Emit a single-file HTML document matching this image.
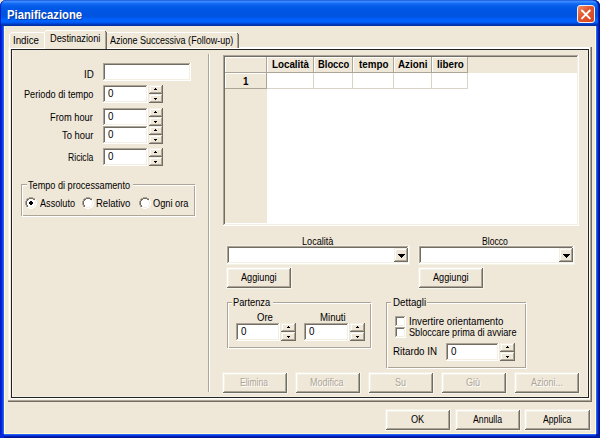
<!DOCTYPE html>
<html><head><meta charset="utf-8"><style>
html,body{margin:0;padding:0;width:600px;height:438px;overflow:hidden;background:#EFE7D8}
body>div,body>svg{position:absolute}
.t{font-family:"Liberation Sans",sans-serif;white-space:nowrap;line-height:13px;height:13px;transform-origin:0 0}
</style></head><body>
<div style="left:0;top:0;width:600px;height:438px;background:#EFE7D8"></div>
<div style="left:590px;top:0px;width:10px;height:10px;background:#FFFFFF"></div>
<div style="left:0;top:0;width:600px;height:26px;border-radius:6px 6px 0 0;background:linear-gradient(to bottom,#0A3FCC 0px,#3D8EFF 1px,#3A8BFF 2px,#1A72F8 3px,#0A62EE 5px,#0058E6 8px,#0053DF 15px,#0056E4 17px,#0060FC 19px,#0062FF 22px,#004FE4 23px,#0040CC 24px,#0030A8 25px,#0030A8 26px);box-shadow:inset 1px 0 0 #0020C8,inset -1px 0 0 #001290,inset -2px 0 0 #0020B8"></div>
<div style="left:0;top:26px;width:4px;height:412px;background:linear-gradient(to right,#0019CF 0px,#0019CF 1px,#0826DA 1px,#0826DA 2px,#0840E8 2px,#0840E8 3px,#2A62F2 3px)"></div>
<div style="left:596px;top:26px;width:4px;height:412px;background:linear-gradient(to right,#2A62F4 0px,#2A62F4 1px,#0838E0 1px,#0838E0 2px,#0020B8 2px,#0020B8 3px,#001290 3px)"></div>
<div style="left:4px;top:434px;width:592px;height:4px;background:linear-gradient(to bottom,#2A62F4 0px,#2A62F4 1px,#0838E0 1px,#0838E0 2px,#0020B8 2px,#0020B8 3px,#001290 3px)"></div>
<div style="left:0;top:434px;width:4px;height:4px;background:#0826DA"></div>
<div style="left:596px;top:434px;width:4px;height:4px;background:#001AA0"></div>
<div style="left:4px;top:26px;width:1px;height:408px;background:#FFFDD0"></div>
<div style="left:595px;top:26px;width:1px;height:408px;background:#FFFDD0"></div>
<div style="left:4px;top:433px;width:592px;height:1px;background:#FFFDD0"></div>
<div class="t" style="left:8px;top:10px;font-size:12.5px;font-weight:bold;color:#0A1E6A;transform:scaleX(0.9);transform-origin:0 0;opacity:.6">Pianificazione</div>
<div class="t" style="left:7px;top:9px;font-size:12.5px;font-weight:bold;color:#FFF;transform:scaleX(0.9);transform-origin:0 0">Pianificazione</div>
<div style="left:577px;top:5px;width:16px;height:16px;border:1px solid #F4F0F0;border-radius:3px;background:linear-gradient(135deg,#F39070 0%,#E2582F 40%,#D54420 100%)"></div>
<svg style="position:absolute;left:577px;top:5px" width="18" height="18"><path d="M5 5.5 L12.8 13.3 M12.8 5.5 L5 13.3" stroke="#FFF" stroke-width="1.9" stroke-linecap="round"/></svg>
<div style="left:8px;top:47px;width:584px;height:355px;background:#EFE7D8"></div>
<div style="left:8px;top:47px;width:584px;height:2px;background:#FFFFFF"></div>
<div style="left:8px;top:47px;width:2px;height:355px;background:#FFFFFF"></div>
<div style="left:8px;top:47px;width:1px;height:355px;background:#F4F2E8"></div>
<div style="left:590px;top:47px;width:1px;height:355px;background:#ACA597"></div>
<div style="left:591px;top:47px;width:1px;height:355px;background:#716D62"></div>
<div style="left:8px;top:399px;width:582px;height:1px;background:#F3EFE3"></div>
<div style="left:8px;top:400px;width:583px;height:1px;background:#ACA597"></div>
<div style="left:8px;top:401px;width:584px;height:1px;background:#716D62"></div>
<div style="left:11px;top:49px;width:578px;height:1px;background:#222"></div>
<div style="left:11px;top:49px;width:1px;height:349px;background:#222"></div>
<div style="left:11px;top:397px;width:578px;height:1px;background:#222"></div>
<div style="left:588px;top:49px;width:1px;height:349px;background:#222"></div>
<div style="left:12px;top:50px;width:1px;height:347px;background:#F8F7F0"></div>
<div style="left:587px;top:50px;width:1px;height:347px;background:#F3EFE3"></div>
<div style="left:12px;top:396px;width:576px;height:1px;background:#F3EFE3"></div>
<div style="left:589px;top:49px;width:1px;height:350px;background:#FFFFFF"></div>
<div style="left:11px;top:398px;width:579px;height:1px;background:#FFFFFF"></div>
<div style="left:9px;top:32px;width:37px;height:16px;background:#EFE7D8"></div>
<div style="left:9px;top:34px;width:1px;height:14px;background:#FFF"></div>
<div style="left:10px;top:33px;width:1px;height:1px;background:#FFF"></div>
<div style="left:11px;top:32px;width:33px;height:1px;background:#FFF"></div>
<div style="left:44px;top:33px;width:1px;height:1px;background:#716D62"></div>
<div style="left:45px;top:34px;width:1px;height:14px;background:#716D62"></div>
<div style="left:44px;top:34px;width:1px;height:14px;background:#ACA597"></div>
<div style="left:105px;top:32px;width:134px;height:16px;background:#EFE7D8"></div>
<div style="left:105px;top:34px;width:1px;height:14px;background:#FFF"></div>
<div style="left:106px;top:33px;width:1px;height:1px;background:#FFF"></div>
<div style="left:107px;top:32px;width:130px;height:1px;background:#FFF"></div>
<div style="left:237px;top:33px;width:1px;height:1px;background:#716D62"></div>
<div style="left:238px;top:34px;width:1px;height:14px;background:#716D62"></div>
<div style="left:237px;top:34px;width:1px;height:14px;background:#ACA597"></div>
<div style="left:44px;top:30px;width:63px;height:19px;background:#EFE7D8"></div>
<div style="left:44px;top:32px;width:1px;height:17px;background:#FFF"></div>
<div style="left:45px;top:31px;width:1px;height:1px;background:#FFF"></div>
<div style="left:46px;top:30px;width:59px;height:1px;background:#FFF"></div>
<div style="left:105px;top:31px;width:1px;height:1px;background:#716D62"></div>
<div style="left:106px;top:32px;width:1px;height:17px;background:#716D62"></div>
<div style="left:105px;top:32px;width:1px;height:17px;background:#ACA597"></div>
<div style="left:45px;top:47px;width:60px;height:2px;background:#EFE7D8"></div>
<div class="t" style="left:13.27px;top:34px;font-size:10px;font-weight:normal;color:#000;transform:scaleX(0.971);-webkit-text-stroke:0px #000">Indice</div>
<div class="t" style="left:49.71px;top:32px;font-size:10px;font-weight:normal;color:#000;transform:scaleX(0.925);-webkit-text-stroke:0px #000">Destinazioni</div>
<div class="t" style="left:110.00px;top:34px;font-size:10px;font-weight:normal;color:#000;transform:scaleX(0.901);-webkit-text-stroke:0px #000">Azione Successiva (Follow-up)</div>
<div class="t" style="left:83.69px;top:68px;font-size:10px;font-weight:normal;color:#000;transform:scaleX(0.980);-webkit-text-stroke:0px #000">ID</div>
<div style="left:103px;top:63px;width:88px;height:18px;background:#FFFFFF"></div>
<div style="left:103px;top:63px;width:88px;height:1px;background:#ACA597"></div>
<div style="left:103px;top:63px;width:1px;height:18px;background:#ACA597"></div>
<div style="left:103px;top:80px;width:88px;height:1px;background:#FFFFFF"></div>
<div style="left:190px;top:63px;width:1px;height:18px;background:#FFFFFF"></div>
<div style="left:104px;top:64px;width:86px;height:1px;background:#716D62"></div>
<div style="left:104px;top:64px;width:1px;height:16px;background:#716D62"></div>
<div style="left:104px;top:79px;width:86px;height:1px;background:#F3EFE3"></div>
<div style="left:189px;top:64px;width:1px;height:16px;background:#F3EFE3"></div>
<div class="t" style="left:23.91px;top:88px;font-size:10px;font-weight:normal;color:#000;transform:scaleX(0.918);-webkit-text-stroke:0px #000">Periodo di tempo</div>
<div style="left:103px;top:85px;width:45px;height:18px;background:#FFFFFF"></div>
<div style="left:103px;top:85px;width:45px;height:1px;background:#ACA597"></div>
<div style="left:103px;top:85px;width:1px;height:18px;background:#ACA597"></div>
<div style="left:103px;top:102px;width:45px;height:1px;background:#FFFFFF"></div>
<div style="left:147px;top:85px;width:1px;height:18px;background:#FFFFFF"></div>
<div style="left:104px;top:86px;width:43px;height:1px;background:#716D62"></div>
<div style="left:104px;top:86px;width:1px;height:16px;background:#716D62"></div>
<div style="left:104px;top:101px;width:43px;height:1px;background:#F3EFE3"></div>
<div style="left:146px;top:86px;width:1px;height:16px;background:#F3EFE3"></div>
<div class="t" style="left:107.75px;top:87px;font-size:10px;font-weight:normal;color:#000;transform:scaleX(0.980);-webkit-text-stroke:0px #000">0</div>
<div style="left:149px;top:85px;width:14px;height:9px;background:#EFE7D8"></div>
<div style="left:149px;top:85px;width:14px;height:1px;background:#F3EFE3"></div>
<div style="left:149px;top:85px;width:1px;height:9px;background:#F3EFE3"></div>
<div style="left:149px;top:93px;width:14px;height:1px;background:#716D62"></div>
<div style="left:162px;top:85px;width:1px;height:9px;background:#716D62"></div>
<div style="left:150px;top:86px;width:12px;height:1px;background:#FFFFFF"></div>
<div style="left:150px;top:86px;width:1px;height:7px;background:#FFFFFF"></div>
<div style="left:150px;top:92px;width:12px;height:1px;background:#ACA597"></div>
<div style="left:161px;top:86px;width:1px;height:7px;background:#ACA597"></div>
<div style="left:149px;top:94px;width:14px;height:9px;background:#EFE7D8"></div>
<div style="left:149px;top:94px;width:14px;height:1px;background:#F3EFE3"></div>
<div style="left:149px;top:94px;width:1px;height:9px;background:#F3EFE3"></div>
<div style="left:149px;top:102px;width:14px;height:1px;background:#716D62"></div>
<div style="left:162px;top:94px;width:1px;height:9px;background:#716D62"></div>
<div style="left:150px;top:95px;width:12px;height:1px;background:#FFFFFF"></div>
<div style="left:150px;top:95px;width:1px;height:7px;background:#FFFFFF"></div>
<div style="left:150px;top:101px;width:12px;height:1px;background:#ACA597"></div>
<div style="left:161px;top:95px;width:1px;height:7px;background:#ACA597"></div>
<div style="left:154px;top:89px;width:3px;height:1px;background:#000"></div>
<div style="left:155px;top:88px;width:1px;height:1px;background:#000"></div>
<div style="left:154px;top:98px;width:3px;height:1px;background:#000"></div>
<div style="left:155px;top:99px;width:1px;height:1px;background:#000"></div>
<div class="t" style="left:50.30px;top:111px;font-size:10px;font-weight:normal;color:#000;transform:scaleX(0.928);-webkit-text-stroke:0px #000">From hour</div>
<div style="left:103px;top:108px;width:45px;height:18px;background:#FFFFFF"></div>
<div style="left:103px;top:108px;width:45px;height:1px;background:#ACA597"></div>
<div style="left:103px;top:108px;width:1px;height:18px;background:#ACA597"></div>
<div style="left:103px;top:125px;width:45px;height:1px;background:#FFFFFF"></div>
<div style="left:147px;top:108px;width:1px;height:18px;background:#FFFFFF"></div>
<div style="left:104px;top:109px;width:43px;height:1px;background:#716D62"></div>
<div style="left:104px;top:109px;width:1px;height:16px;background:#716D62"></div>
<div style="left:104px;top:124px;width:43px;height:1px;background:#F3EFE3"></div>
<div style="left:146px;top:109px;width:1px;height:16px;background:#F3EFE3"></div>
<div class="t" style="left:107.75px;top:110px;font-size:10px;font-weight:normal;color:#000;transform:scaleX(0.980);-webkit-text-stroke:0px #000">0</div>
<div style="left:149px;top:108px;width:14px;height:9px;background:#EFE7D8"></div>
<div style="left:149px;top:108px;width:14px;height:1px;background:#F3EFE3"></div>
<div style="left:149px;top:108px;width:1px;height:9px;background:#F3EFE3"></div>
<div style="left:149px;top:116px;width:14px;height:1px;background:#716D62"></div>
<div style="left:162px;top:108px;width:1px;height:9px;background:#716D62"></div>
<div style="left:150px;top:109px;width:12px;height:1px;background:#FFFFFF"></div>
<div style="left:150px;top:109px;width:1px;height:7px;background:#FFFFFF"></div>
<div style="left:150px;top:115px;width:12px;height:1px;background:#ACA597"></div>
<div style="left:161px;top:109px;width:1px;height:7px;background:#ACA597"></div>
<div style="left:149px;top:117px;width:14px;height:9px;background:#EFE7D8"></div>
<div style="left:149px;top:117px;width:14px;height:1px;background:#F3EFE3"></div>
<div style="left:149px;top:117px;width:1px;height:9px;background:#F3EFE3"></div>
<div style="left:149px;top:125px;width:14px;height:1px;background:#716D62"></div>
<div style="left:162px;top:117px;width:1px;height:9px;background:#716D62"></div>
<div style="left:150px;top:118px;width:12px;height:1px;background:#FFFFFF"></div>
<div style="left:150px;top:118px;width:1px;height:7px;background:#FFFFFF"></div>
<div style="left:150px;top:124px;width:12px;height:1px;background:#ACA597"></div>
<div style="left:161px;top:118px;width:1px;height:7px;background:#ACA597"></div>
<div style="left:154px;top:112px;width:3px;height:1px;background:#000"></div>
<div style="left:155px;top:111px;width:1px;height:1px;background:#000"></div>
<div style="left:154px;top:121px;width:3px;height:1px;background:#000"></div>
<div style="left:155px;top:122px;width:1px;height:1px;background:#000"></div>
<div class="t" style="left:61.77px;top:129px;font-size:10px;font-weight:normal;color:#000;transform:scaleX(0.939);-webkit-text-stroke:0px #000">To hour</div>
<div style="left:103px;top:126px;width:45px;height:18px;background:#FFFFFF"></div>
<div style="left:103px;top:126px;width:45px;height:1px;background:#ACA597"></div>
<div style="left:103px;top:126px;width:1px;height:18px;background:#ACA597"></div>
<div style="left:103px;top:143px;width:45px;height:1px;background:#FFFFFF"></div>
<div style="left:147px;top:126px;width:1px;height:18px;background:#FFFFFF"></div>
<div style="left:104px;top:127px;width:43px;height:1px;background:#716D62"></div>
<div style="left:104px;top:127px;width:1px;height:16px;background:#716D62"></div>
<div style="left:104px;top:142px;width:43px;height:1px;background:#F3EFE3"></div>
<div style="left:146px;top:127px;width:1px;height:16px;background:#F3EFE3"></div>
<div class="t" style="left:107.75px;top:128px;font-size:10px;font-weight:normal;color:#000;transform:scaleX(0.980);-webkit-text-stroke:0px #000">0</div>
<div style="left:149px;top:126px;width:14px;height:9px;background:#EFE7D8"></div>
<div style="left:149px;top:126px;width:14px;height:1px;background:#F3EFE3"></div>
<div style="left:149px;top:126px;width:1px;height:9px;background:#F3EFE3"></div>
<div style="left:149px;top:134px;width:14px;height:1px;background:#716D62"></div>
<div style="left:162px;top:126px;width:1px;height:9px;background:#716D62"></div>
<div style="left:150px;top:127px;width:12px;height:1px;background:#FFFFFF"></div>
<div style="left:150px;top:127px;width:1px;height:7px;background:#FFFFFF"></div>
<div style="left:150px;top:133px;width:12px;height:1px;background:#ACA597"></div>
<div style="left:161px;top:127px;width:1px;height:7px;background:#ACA597"></div>
<div style="left:149px;top:135px;width:14px;height:9px;background:#EFE7D8"></div>
<div style="left:149px;top:135px;width:14px;height:1px;background:#F3EFE3"></div>
<div style="left:149px;top:135px;width:1px;height:9px;background:#F3EFE3"></div>
<div style="left:149px;top:143px;width:14px;height:1px;background:#716D62"></div>
<div style="left:162px;top:135px;width:1px;height:9px;background:#716D62"></div>
<div style="left:150px;top:136px;width:12px;height:1px;background:#FFFFFF"></div>
<div style="left:150px;top:136px;width:1px;height:7px;background:#FFFFFF"></div>
<div style="left:150px;top:142px;width:12px;height:1px;background:#ACA597"></div>
<div style="left:161px;top:136px;width:1px;height:7px;background:#ACA597"></div>
<div style="left:154px;top:130px;width:3px;height:1px;background:#000"></div>
<div style="left:155px;top:129px;width:1px;height:1px;background:#000"></div>
<div style="left:154px;top:139px;width:3px;height:1px;background:#000"></div>
<div style="left:155px;top:140px;width:1px;height:1px;background:#000"></div>
<div class="t" style="left:67.55px;top:151px;font-size:10px;font-weight:normal;color:#000;transform:scaleX(0.862);-webkit-text-stroke:0px #000">Ricicla</div>
<div style="left:103px;top:148px;width:45px;height:18px;background:#FFFFFF"></div>
<div style="left:103px;top:148px;width:45px;height:1px;background:#ACA597"></div>
<div style="left:103px;top:148px;width:1px;height:18px;background:#ACA597"></div>
<div style="left:103px;top:165px;width:45px;height:1px;background:#FFFFFF"></div>
<div style="left:147px;top:148px;width:1px;height:18px;background:#FFFFFF"></div>
<div style="left:104px;top:149px;width:43px;height:1px;background:#716D62"></div>
<div style="left:104px;top:149px;width:1px;height:16px;background:#716D62"></div>
<div style="left:104px;top:164px;width:43px;height:1px;background:#F3EFE3"></div>
<div style="left:146px;top:149px;width:1px;height:16px;background:#F3EFE3"></div>
<div class="t" style="left:107.75px;top:150px;font-size:10px;font-weight:normal;color:#000;transform:scaleX(0.980);-webkit-text-stroke:0px #000">0</div>
<div style="left:149px;top:148px;width:14px;height:9px;background:#EFE7D8"></div>
<div style="left:149px;top:148px;width:14px;height:1px;background:#F3EFE3"></div>
<div style="left:149px;top:148px;width:1px;height:9px;background:#F3EFE3"></div>
<div style="left:149px;top:156px;width:14px;height:1px;background:#716D62"></div>
<div style="left:162px;top:148px;width:1px;height:9px;background:#716D62"></div>
<div style="left:150px;top:149px;width:12px;height:1px;background:#FFFFFF"></div>
<div style="left:150px;top:149px;width:1px;height:7px;background:#FFFFFF"></div>
<div style="left:150px;top:155px;width:12px;height:1px;background:#ACA597"></div>
<div style="left:161px;top:149px;width:1px;height:7px;background:#ACA597"></div>
<div style="left:149px;top:157px;width:14px;height:9px;background:#EFE7D8"></div>
<div style="left:149px;top:157px;width:14px;height:1px;background:#F3EFE3"></div>
<div style="left:149px;top:157px;width:1px;height:9px;background:#F3EFE3"></div>
<div style="left:149px;top:165px;width:14px;height:1px;background:#716D62"></div>
<div style="left:162px;top:157px;width:1px;height:9px;background:#716D62"></div>
<div style="left:150px;top:158px;width:12px;height:1px;background:#FFFFFF"></div>
<div style="left:150px;top:158px;width:1px;height:7px;background:#FFFFFF"></div>
<div style="left:150px;top:164px;width:12px;height:1px;background:#ACA597"></div>
<div style="left:161px;top:158px;width:1px;height:7px;background:#ACA597"></div>
<div style="left:154px;top:152px;width:3px;height:1px;background:#000"></div>
<div style="left:155px;top:151px;width:1px;height:1px;background:#000"></div>
<div style="left:154px;top:161px;width:3px;height:1px;background:#000"></div>
<div style="left:155px;top:162px;width:1px;height:1px;background:#000"></div>
<div style="left:21px;top:184px;width:174px;height:1px;background:#ACA597"></div>
<div style="left:21px;top:184px;width:1px;height:32px;background:#ACA597"></div>
<div style="left:21px;top:215px;width:174px;height:1px;background:#ACA597"></div>
<div style="left:194px;top:184px;width:1px;height:32px;background:#ACA597"></div>
<div style="left:22px;top:185px;width:174px;height:1px;background:#FFFFFF"></div>
<div style="left:22px;top:185px;width:1px;height:32px;background:#FFFFFF"></div>
<div style="left:22px;top:216px;width:174px;height:1px;background:#FFFFFF"></div>
<div style="left:195px;top:185px;width:1px;height:32px;background:#FFFFFF"></div>
<div style="left:27px;top:178px;width:106px;height:12px;background:#EFE7D8"></div>
<div class="t" style="left:28.47px;top:179px;font-size:10px;font-weight:normal;color:#000;transform:scaleX(0.913);-webkit-text-stroke:0px #000">Tempo di processamento</div>
<svg style="position:absolute;left:25px;top:197px" width="12" height="12" shape-rendering="crispEdges"><rect x="4" y="2" width="4" height="1" fill="#FFF"/><rect x="3" y="3" width="6" height="1" fill="#FFF"/><rect x="2" y="4" width="8" height="1" fill="#FFF"/><rect x="2" y="5" width="8" height="1" fill="#FFF"/><rect x="2" y="6" width="8" height="1" fill="#FFF"/><rect x="2" y="7" width="8" height="1" fill="#FFF"/><rect x="3" y="8" width="6" height="1" fill="#FFF"/><rect x="4" y="9" width="4" height="1" fill="#FFF"/><rect x="4" y="0" width="1" height="1" fill="#ACA597"/><rect x="5" y="0" width="1" height="1" fill="#ACA597"/><rect x="6" y="0" width="1" height="1" fill="#ACA597"/><rect x="7" y="0" width="1" height="1" fill="#ACA597"/><rect x="2" y="1" width="1" height="1" fill="#ACA597"/><rect x="3" y="1" width="1" height="1" fill="#ACA597"/><rect x="8" y="1" width="1" height="1" fill="#ACA597"/><rect x="9" y="1" width="1" height="1" fill="#ACA597"/><rect x="1" y="2" width="1" height="1" fill="#ACA597"/><rect x="1" y="3" width="1" height="1" fill="#ACA597"/><rect x="0" y="4" width="1" height="1" fill="#ACA597"/><rect x="0" y="5" width="1" height="1" fill="#ACA597"/><rect x="0" y="6" width="1" height="1" fill="#ACA597"/><rect x="0" y="7" width="1" height="1" fill="#ACA597"/><rect x="1" y="8" width="1" height="1" fill="#ACA597"/><rect x="1" y="9" width="1" height="1" fill="#ACA597"/><rect x="10" y="2" width="1" height="1" fill="#FFFFFF"/><rect x="10" y="3" width="1" height="1" fill="#FFFFFF"/><rect x="11" y="4" width="1" height="1" fill="#FFFFFF"/><rect x="11" y="5" width="1" height="1" fill="#FFFFFF"/><rect x="11" y="6" width="1" height="1" fill="#FFFFFF"/><rect x="11" y="7" width="1" height="1" fill="#FFFFFF"/><rect x="10" y="8" width="1" height="1" fill="#FFFFFF"/><rect x="10" y="9" width="1" height="1" fill="#FFFFFF"/><rect x="2" y="10" width="1" height="1" fill="#FFFFFF"/><rect x="3" y="10" width="1" height="1" fill="#FFFFFF"/><rect x="8" y="10" width="1" height="1" fill="#FFFFFF"/><rect x="9" y="10" width="1" height="1" fill="#FFFFFF"/><rect x="4" y="11" width="1" height="1" fill="#FFFFFF"/><rect x="5" y="11" width="1" height="1" fill="#FFFFFF"/><rect x="6" y="11" width="1" height="1" fill="#FFFFFF"/><rect x="7" y="11" width="1" height="1" fill="#FFFFFF"/><rect x="4" y="1" width="1" height="1" fill="#716D62"/><rect x="5" y="1" width="1" height="1" fill="#716D62"/><rect x="6" y="1" width="1" height="1" fill="#716D62"/><rect x="7" y="1" width="1" height="1" fill="#716D62"/><rect x="2" y="2" width="1" height="1" fill="#716D62"/><rect x="3" y="2" width="1" height="1" fill="#716D62"/><rect x="8" y="2" width="1" height="1" fill="#716D62"/><rect x="9" y="2" width="1" height="1" fill="#716D62"/><rect x="2" y="3" width="1" height="1" fill="#716D62"/><rect x="1" y="4" width="1" height="1" fill="#716D62"/><rect x="1" y="5" width="1" height="1" fill="#716D62"/><rect x="1" y="6" width="1" height="1" fill="#716D62"/><rect x="1" y="7" width="1" height="1" fill="#716D62"/><rect x="2" y="8" width="1" height="1" fill="#716D62"/><rect x="2" y="9" width="1" height="1" fill="#716D62"/><rect x="9" y="3" width="1" height="1" fill="#F3EFE3"/><rect x="10" y="4" width="1" height="1" fill="#F3EFE3"/><rect x="10" y="5" width="1" height="1" fill="#F3EFE3"/><rect x="10" y="6" width="1" height="1" fill="#F3EFE3"/><rect x="10" y="7" width="1" height="1" fill="#F3EFE3"/><rect x="9" y="8" width="1" height="1" fill="#F3EFE3"/><rect x="3" y="9" width="1" height="1" fill="#F3EFE3"/><rect x="8" y="9" width="1" height="1" fill="#F3EFE3"/><rect x="9" y="9" width="1" height="1" fill="#F3EFE3"/><rect x="4" y="10" width="1" height="1" fill="#F3EFE3"/><rect x="5" y="10" width="1" height="1" fill="#F3EFE3"/><rect x="6" y="10" width="1" height="1" fill="#F3EFE3"/><rect x="7" y="10" width="1" height="1" fill="#F3EFE3"/><rect x="5" y="4" width="1" height="1" fill="#000"/><rect x="6" y="4" width="1" height="1" fill="#000"/><rect x="4" y="5" width="1" height="1" fill="#000"/><rect x="5" y="5" width="1" height="1" fill="#000"/><rect x="6" y="5" width="1" height="1" fill="#000"/><rect x="7" y="5" width="1" height="1" fill="#000"/><rect x="4" y="6" width="1" height="1" fill="#000"/><rect x="5" y="6" width="1" height="1" fill="#000"/><rect x="6" y="6" width="1" height="1" fill="#000"/><rect x="7" y="6" width="1" height="1" fill="#000"/><rect x="5" y="7" width="1" height="1" fill="#000"/><rect x="6" y="7" width="1" height="1" fill="#000"/></svg>
<div class="t" style="left:40.00px;top:197px;font-size:10px;font-weight:normal;color:#000;transform:scaleX(0.913);-webkit-text-stroke:0px #000">Assoluto</div>
<svg style="position:absolute;left:82px;top:197px" width="12" height="12" shape-rendering="crispEdges"><rect x="4" y="2" width="4" height="1" fill="#FFF"/><rect x="3" y="3" width="6" height="1" fill="#FFF"/><rect x="2" y="4" width="8" height="1" fill="#FFF"/><rect x="2" y="5" width="8" height="1" fill="#FFF"/><rect x="2" y="6" width="8" height="1" fill="#FFF"/><rect x="2" y="7" width="8" height="1" fill="#FFF"/><rect x="3" y="8" width="6" height="1" fill="#FFF"/><rect x="4" y="9" width="4" height="1" fill="#FFF"/><rect x="4" y="0" width="1" height="1" fill="#ACA597"/><rect x="5" y="0" width="1" height="1" fill="#ACA597"/><rect x="6" y="0" width="1" height="1" fill="#ACA597"/><rect x="7" y="0" width="1" height="1" fill="#ACA597"/><rect x="2" y="1" width="1" height="1" fill="#ACA597"/><rect x="3" y="1" width="1" height="1" fill="#ACA597"/><rect x="8" y="1" width="1" height="1" fill="#ACA597"/><rect x="9" y="1" width="1" height="1" fill="#ACA597"/><rect x="1" y="2" width="1" height="1" fill="#ACA597"/><rect x="1" y="3" width="1" height="1" fill="#ACA597"/><rect x="0" y="4" width="1" height="1" fill="#ACA597"/><rect x="0" y="5" width="1" height="1" fill="#ACA597"/><rect x="0" y="6" width="1" height="1" fill="#ACA597"/><rect x="0" y="7" width="1" height="1" fill="#ACA597"/><rect x="1" y="8" width="1" height="1" fill="#ACA597"/><rect x="1" y="9" width="1" height="1" fill="#ACA597"/><rect x="10" y="2" width="1" height="1" fill="#FFFFFF"/><rect x="10" y="3" width="1" height="1" fill="#FFFFFF"/><rect x="11" y="4" width="1" height="1" fill="#FFFFFF"/><rect x="11" y="5" width="1" height="1" fill="#FFFFFF"/><rect x="11" y="6" width="1" height="1" fill="#FFFFFF"/><rect x="11" y="7" width="1" height="1" fill="#FFFFFF"/><rect x="10" y="8" width="1" height="1" fill="#FFFFFF"/><rect x="10" y="9" width="1" height="1" fill="#FFFFFF"/><rect x="2" y="10" width="1" height="1" fill="#FFFFFF"/><rect x="3" y="10" width="1" height="1" fill="#FFFFFF"/><rect x="8" y="10" width="1" height="1" fill="#FFFFFF"/><rect x="9" y="10" width="1" height="1" fill="#FFFFFF"/><rect x="4" y="11" width="1" height="1" fill="#FFFFFF"/><rect x="5" y="11" width="1" height="1" fill="#FFFFFF"/><rect x="6" y="11" width="1" height="1" fill="#FFFFFF"/><rect x="7" y="11" width="1" height="1" fill="#FFFFFF"/><rect x="4" y="1" width="1" height="1" fill="#716D62"/><rect x="5" y="1" width="1" height="1" fill="#716D62"/><rect x="6" y="1" width="1" height="1" fill="#716D62"/><rect x="7" y="1" width="1" height="1" fill="#716D62"/><rect x="2" y="2" width="1" height="1" fill="#716D62"/><rect x="3" y="2" width="1" height="1" fill="#716D62"/><rect x="8" y="2" width="1" height="1" fill="#716D62"/><rect x="9" y="2" width="1" height="1" fill="#716D62"/><rect x="2" y="3" width="1" height="1" fill="#716D62"/><rect x="1" y="4" width="1" height="1" fill="#716D62"/><rect x="1" y="5" width="1" height="1" fill="#716D62"/><rect x="1" y="6" width="1" height="1" fill="#716D62"/><rect x="1" y="7" width="1" height="1" fill="#716D62"/><rect x="2" y="8" width="1" height="1" fill="#716D62"/><rect x="2" y="9" width="1" height="1" fill="#716D62"/><rect x="9" y="3" width="1" height="1" fill="#F3EFE3"/><rect x="10" y="4" width="1" height="1" fill="#F3EFE3"/><rect x="10" y="5" width="1" height="1" fill="#F3EFE3"/><rect x="10" y="6" width="1" height="1" fill="#F3EFE3"/><rect x="10" y="7" width="1" height="1" fill="#F3EFE3"/><rect x="9" y="8" width="1" height="1" fill="#F3EFE3"/><rect x="3" y="9" width="1" height="1" fill="#F3EFE3"/><rect x="8" y="9" width="1" height="1" fill="#F3EFE3"/><rect x="9" y="9" width="1" height="1" fill="#F3EFE3"/><rect x="4" y="10" width="1" height="1" fill="#F3EFE3"/><rect x="5" y="10" width="1" height="1" fill="#F3EFE3"/><rect x="6" y="10" width="1" height="1" fill="#F3EFE3"/><rect x="7" y="10" width="1" height="1" fill="#F3EFE3"/></svg>
<div class="t" style="left:95.99px;top:197px;font-size:10px;font-weight:normal;color:#000;transform:scaleX(0.951);-webkit-text-stroke:0px #000">Relativo</div>
<svg style="position:absolute;left:139px;top:197px" width="12" height="12" shape-rendering="crispEdges"><rect x="4" y="2" width="4" height="1" fill="#FFF"/><rect x="3" y="3" width="6" height="1" fill="#FFF"/><rect x="2" y="4" width="8" height="1" fill="#FFF"/><rect x="2" y="5" width="8" height="1" fill="#FFF"/><rect x="2" y="6" width="8" height="1" fill="#FFF"/><rect x="2" y="7" width="8" height="1" fill="#FFF"/><rect x="3" y="8" width="6" height="1" fill="#FFF"/><rect x="4" y="9" width="4" height="1" fill="#FFF"/><rect x="4" y="0" width="1" height="1" fill="#ACA597"/><rect x="5" y="0" width="1" height="1" fill="#ACA597"/><rect x="6" y="0" width="1" height="1" fill="#ACA597"/><rect x="7" y="0" width="1" height="1" fill="#ACA597"/><rect x="2" y="1" width="1" height="1" fill="#ACA597"/><rect x="3" y="1" width="1" height="1" fill="#ACA597"/><rect x="8" y="1" width="1" height="1" fill="#ACA597"/><rect x="9" y="1" width="1" height="1" fill="#ACA597"/><rect x="1" y="2" width="1" height="1" fill="#ACA597"/><rect x="1" y="3" width="1" height="1" fill="#ACA597"/><rect x="0" y="4" width="1" height="1" fill="#ACA597"/><rect x="0" y="5" width="1" height="1" fill="#ACA597"/><rect x="0" y="6" width="1" height="1" fill="#ACA597"/><rect x="0" y="7" width="1" height="1" fill="#ACA597"/><rect x="1" y="8" width="1" height="1" fill="#ACA597"/><rect x="1" y="9" width="1" height="1" fill="#ACA597"/><rect x="10" y="2" width="1" height="1" fill="#FFFFFF"/><rect x="10" y="3" width="1" height="1" fill="#FFFFFF"/><rect x="11" y="4" width="1" height="1" fill="#FFFFFF"/><rect x="11" y="5" width="1" height="1" fill="#FFFFFF"/><rect x="11" y="6" width="1" height="1" fill="#FFFFFF"/><rect x="11" y="7" width="1" height="1" fill="#FFFFFF"/><rect x="10" y="8" width="1" height="1" fill="#FFFFFF"/><rect x="10" y="9" width="1" height="1" fill="#FFFFFF"/><rect x="2" y="10" width="1" height="1" fill="#FFFFFF"/><rect x="3" y="10" width="1" height="1" fill="#FFFFFF"/><rect x="8" y="10" width="1" height="1" fill="#FFFFFF"/><rect x="9" y="10" width="1" height="1" fill="#FFFFFF"/><rect x="4" y="11" width="1" height="1" fill="#FFFFFF"/><rect x="5" y="11" width="1" height="1" fill="#FFFFFF"/><rect x="6" y="11" width="1" height="1" fill="#FFFFFF"/><rect x="7" y="11" width="1" height="1" fill="#FFFFFF"/><rect x="4" y="1" width="1" height="1" fill="#716D62"/><rect x="5" y="1" width="1" height="1" fill="#716D62"/><rect x="6" y="1" width="1" height="1" fill="#716D62"/><rect x="7" y="1" width="1" height="1" fill="#716D62"/><rect x="2" y="2" width="1" height="1" fill="#716D62"/><rect x="3" y="2" width="1" height="1" fill="#716D62"/><rect x="8" y="2" width="1" height="1" fill="#716D62"/><rect x="9" y="2" width="1" height="1" fill="#716D62"/><rect x="2" y="3" width="1" height="1" fill="#716D62"/><rect x="1" y="4" width="1" height="1" fill="#716D62"/><rect x="1" y="5" width="1" height="1" fill="#716D62"/><rect x="1" y="6" width="1" height="1" fill="#716D62"/><rect x="1" y="7" width="1" height="1" fill="#716D62"/><rect x="2" y="8" width="1" height="1" fill="#716D62"/><rect x="2" y="9" width="1" height="1" fill="#716D62"/><rect x="9" y="3" width="1" height="1" fill="#F3EFE3"/><rect x="10" y="4" width="1" height="1" fill="#F3EFE3"/><rect x="10" y="5" width="1" height="1" fill="#F3EFE3"/><rect x="10" y="6" width="1" height="1" fill="#F3EFE3"/><rect x="10" y="7" width="1" height="1" fill="#F3EFE3"/><rect x="9" y="8" width="1" height="1" fill="#F3EFE3"/><rect x="3" y="9" width="1" height="1" fill="#F3EFE3"/><rect x="8" y="9" width="1" height="1" fill="#F3EFE3"/><rect x="9" y="9" width="1" height="1" fill="#F3EFE3"/><rect x="4" y="10" width="1" height="1" fill="#F3EFE3"/><rect x="5" y="10" width="1" height="1" fill="#F3EFE3"/><rect x="6" y="10" width="1" height="1" fill="#F3EFE3"/><rect x="7" y="10" width="1" height="1" fill="#F3EFE3"/></svg>
<div class="t" style="left:152.94px;top:197px;font-size:10px;font-weight:normal;color:#000;transform:scaleX(0.924);-webkit-text-stroke:0px #000">Ogni ora</div>
<div style="left:208px;top:54px;width:1px;height:338px;background:#ACA597"></div>
<div style="left:209px;top:54px;width:1px;height:338px;background:#FFF"></div>
<div style="left:223px;top:55px;width:356px;height:171px;background:#FFFFFF"></div>
<div style="left:223px;top:55px;width:356px;height:1px;background:#ACA597"></div>
<div style="left:223px;top:55px;width:1px;height:171px;background:#ACA597"></div>
<div style="left:223px;top:225px;width:356px;height:1px;background:#FFFFFF"></div>
<div style="left:578px;top:55px;width:1px;height:171px;background:#FFFFFF"></div>
<div style="left:224px;top:56px;width:354px;height:1px;background:#716D62"></div>
<div style="left:224px;top:56px;width:1px;height:169px;background:#716D62"></div>
<div style="left:224px;top:224px;width:354px;height:1px;background:#F3EFE3"></div>
<div style="left:577px;top:56px;width:1px;height:169px;background:#F3EFE3"></div>
<div style="left:225px;top:57px;width:42px;height:166px;background:#EFE7D8"></div>
<div style="left:225px;top:57px;width:352px;height:16px;background:#EFE7D8"></div>
<div style="left:225px;top:57px;width:1px;height:15px;background:#FFF"></div>
<div style="left:225px;top:57px;width:41px;height:1px;background:#FFF"></div>
<div style="left:266px;top:57px;width:1px;height:16px;background:#ACA597"></div>
<div style="left:225px;top:72px;width:42px;height:1px;background:#ACA597"></div>
<div style="left:267px;top:57px;width:1px;height:15px;background:#FFF"></div>
<div style="left:267px;top:57px;width:46px;height:1px;background:#FFF"></div>
<div style="left:313px;top:57px;width:1px;height:16px;background:#ACA597"></div>
<div style="left:267px;top:72px;width:47px;height:1px;background:#ACA597"></div>
<div class="t" style="left:271.63px;top:58px;font-size:10px;font-weight:bold;color:#000;transform:scaleX(0.980);-webkit-text-stroke:0px #000">Località</div>
<div style="left:314px;top:57px;width:1px;height:15px;background:#FFF"></div>
<div style="left:314px;top:57px;width:38px;height:1px;background:#FFF"></div>
<div style="left:352px;top:57px;width:1px;height:16px;background:#ACA597"></div>
<div style="left:314px;top:72px;width:39px;height:1px;background:#ACA597"></div>
<div class="t" style="left:317.78px;top:58px;font-size:10px;font-weight:bold;color:#000;transform:scaleX(0.938);-webkit-text-stroke:0px #000">Blocco</div>
<div style="left:353px;top:57px;width:1px;height:15px;background:#FFF"></div>
<div style="left:353px;top:57px;width:40px;height:1px;background:#FFF"></div>
<div style="left:393px;top:57px;width:1px;height:16px;background:#ACA597"></div>
<div style="left:353px;top:72px;width:41px;height:1px;background:#ACA597"></div>
<div class="t" style="left:358.92px;top:58px;font-size:10px;font-weight:bold;color:#000;transform:scaleX(0.980);-webkit-text-stroke:0px #000">tempo</div>
<div style="left:394px;top:57px;width:1px;height:15px;background:#FFF"></div>
<div style="left:394px;top:57px;width:37px;height:1px;background:#FFF"></div>
<div style="left:431px;top:57px;width:1px;height:16px;background:#ACA597"></div>
<div style="left:394px;top:72px;width:38px;height:1px;background:#ACA597"></div>
<div class="t" style="left:398.42px;top:58px;font-size:10px;font-weight:bold;color:#000;transform:scaleX(0.980);-webkit-text-stroke:0px #000">Azioni</div>
<div style="left:432px;top:57px;width:1px;height:15px;background:#FFF"></div>
<div style="left:432px;top:57px;width:35px;height:1px;background:#FFF"></div>
<div style="left:467px;top:57px;width:1px;height:16px;background:#ACA597"></div>
<div style="left:432px;top:72px;width:36px;height:1px;background:#ACA597"></div>
<div class="t" style="left:436.52px;top:58px;font-size:10px;font-weight:bold;color:#000;transform:scaleX(0.980);-webkit-text-stroke:0px #000">libero</div>
<div style="left:225px;top:73px;width:1px;height:15px;background:#FFF"></div>
<div style="left:225px;top:73px;width:41px;height:1px;background:#FFF"></div>
<div style="left:266px;top:73px;width:1px;height:16px;background:#ACA597"></div>
<div style="left:225px;top:88px;width:42px;height:1px;background:#ACA597"></div>
<div class="t" style="left:242.68px;top:75px;font-size:10px;font-weight:bold;color:#000;transform:scaleX(0.980);-webkit-text-stroke:0px #000">1</div>
<div style="left:313px;top:73px;width:1px;height:16px;background:#D8D5C8"></div>
<div style="left:267px;top:88px;width:47px;height:1px;background:#D8D5C8"></div>
<div style="left:352px;top:73px;width:1px;height:16px;background:#D8D5C8"></div>
<div style="left:314px;top:88px;width:39px;height:1px;background:#D8D5C8"></div>
<div style="left:393px;top:73px;width:1px;height:16px;background:#D8D5C8"></div>
<div style="left:353px;top:88px;width:41px;height:1px;background:#D8D5C8"></div>
<div style="left:431px;top:73px;width:1px;height:16px;background:#D8D5C8"></div>
<div style="left:394px;top:88px;width:38px;height:1px;background:#D8D5C8"></div>
<div style="left:467px;top:73px;width:1px;height:16px;background:#D8D5C8"></div>
<div style="left:432px;top:88px;width:36px;height:1px;background:#D8D5C8"></div>
<div class="t" style="left:301.62px;top:235px;font-size:10px;font-weight:normal;color:#000;transform:scaleX(0.912);-webkit-text-stroke:0px #000">Località</div>
<div style="left:226px;top:245px;width:184px;height:1px;background:#F3EFE3"></div>
<div style="left:226px;top:245px;width:1px;height:20px;background:#F3EFE3"></div>
<div style="left:226px;top:264px;width:184px;height:1px;background:#F2F2E6"></div>
<div style="left:409px;top:245px;width:1px;height:20px;background:#F2F2E6"></div>
<div style="left:227px;top:246px;width:182px;height:18px;background:#FFFFFF"></div>
<div style="left:227px;top:246px;width:182px;height:1px;background:#ACA597"></div>
<div style="left:227px;top:246px;width:1px;height:18px;background:#ACA597"></div>
<div style="left:227px;top:263px;width:182px;height:1px;background:#FFFFFF"></div>
<div style="left:408px;top:246px;width:1px;height:18px;background:#FFFFFF"></div>
<div style="left:228px;top:247px;width:180px;height:1px;background:#716D62"></div>
<div style="left:228px;top:247px;width:1px;height:16px;background:#716D62"></div>
<div style="left:228px;top:262px;width:180px;height:1px;background:#F3EFE3"></div>
<div style="left:407px;top:247px;width:1px;height:16px;background:#F3EFE3"></div>
<div style="left:394px;top:248px;width:14px;height:14px;background:#EFE7D8"></div>
<div style="left:394px;top:248px;width:14px;height:1px;background:#F3EFE3"></div>
<div style="left:394px;top:248px;width:1px;height:14px;background:#F3EFE3"></div>
<div style="left:394px;top:261px;width:14px;height:1px;background:#716D62"></div>
<div style="left:407px;top:248px;width:1px;height:14px;background:#716D62"></div>
<div style="left:395px;top:249px;width:12px;height:1px;background:#FFFFFF"></div>
<div style="left:395px;top:249px;width:1px;height:12px;background:#FFFFFF"></div>
<div style="left:395px;top:260px;width:12px;height:1px;background:#ACA597"></div>
<div style="left:406px;top:249px;width:1px;height:12px;background:#ACA597"></div>
<div style="left:398px;top:254px;width:7px;height:1px;background:#000"></div>
<div style="left:399px;top:255px;width:5px;height:1px;background:#000"></div>
<div style="left:400px;top:256px;width:3px;height:1px;background:#000"></div>
<div style="left:401px;top:257px;width:1px;height:1px;background:#000"></div>
<div style="left:226px;top:267px;width:66px;height:22px;background:#EFE7D8"></div>
<div style="left:226px;top:267px;width:66px;height:1px;background:#F3EFE3"></div>
<div style="left:226px;top:267px;width:1px;height:22px;background:#F3EFE3"></div>
<div style="left:226px;top:288px;width:66px;height:1px;background:#F6F6EE"></div>
<div style="left:291px;top:267px;width:1px;height:22px;background:#F6F6EE"></div>
<div style="left:227px;top:268px;width:64px;height:1px;background:#FFFFFF"></div>
<div style="left:227px;top:268px;width:1px;height:20px;background:#FFFFFF"></div>
<div style="left:227px;top:287px;width:64px;height:1px;background:#716D62"></div>
<div style="left:290px;top:268px;width:1px;height:20px;background:#716D62"></div>
<div style="left:228px;top:269px;width:62px;height:1px;background:#F3F1E6"></div>
<div style="left:228px;top:269px;width:1px;height:18px;background:#F3F1E6"></div>
<div style="left:228px;top:286px;width:62px;height:1px;background:#ACA597"></div>
<div style="left:289px;top:269px;width:1px;height:18px;background:#ACA597"></div>
<div class="t" style="left:241.30px;top:271px;font-size:10px;font-weight:normal;color:#000;transform:scaleX(0.915);-webkit-text-stroke:0px #000">Aggiungi</div>
<div class="t" style="left:482.35px;top:235px;font-size:10px;font-weight:normal;color:#000;transform:scaleX(0.862);-webkit-text-stroke:0px #000">Blocco</div>
<div style="left:418px;top:245px;width:157px;height:1px;background:#F3EFE3"></div>
<div style="left:418px;top:245px;width:1px;height:20px;background:#F3EFE3"></div>
<div style="left:418px;top:264px;width:157px;height:1px;background:#F2F2E6"></div>
<div style="left:574px;top:245px;width:1px;height:20px;background:#F2F2E6"></div>
<div style="left:419px;top:246px;width:155px;height:18px;background:#FFFFFF"></div>
<div style="left:419px;top:246px;width:155px;height:1px;background:#ACA597"></div>
<div style="left:419px;top:246px;width:1px;height:18px;background:#ACA597"></div>
<div style="left:419px;top:263px;width:155px;height:1px;background:#FFFFFF"></div>
<div style="left:573px;top:246px;width:1px;height:18px;background:#FFFFFF"></div>
<div style="left:420px;top:247px;width:153px;height:1px;background:#716D62"></div>
<div style="left:420px;top:247px;width:1px;height:16px;background:#716D62"></div>
<div style="left:420px;top:262px;width:153px;height:1px;background:#F3EFE3"></div>
<div style="left:572px;top:247px;width:1px;height:16px;background:#F3EFE3"></div>
<div style="left:559px;top:248px;width:14px;height:14px;background:#EFE7D8"></div>
<div style="left:559px;top:248px;width:14px;height:1px;background:#F3EFE3"></div>
<div style="left:559px;top:248px;width:1px;height:14px;background:#F3EFE3"></div>
<div style="left:559px;top:261px;width:14px;height:1px;background:#716D62"></div>
<div style="left:572px;top:248px;width:1px;height:14px;background:#716D62"></div>
<div style="left:560px;top:249px;width:12px;height:1px;background:#FFFFFF"></div>
<div style="left:560px;top:249px;width:1px;height:12px;background:#FFFFFF"></div>
<div style="left:560px;top:260px;width:12px;height:1px;background:#ACA597"></div>
<div style="left:571px;top:249px;width:1px;height:12px;background:#ACA597"></div>
<div style="left:563px;top:254px;width:7px;height:1px;background:#000"></div>
<div style="left:564px;top:255px;width:5px;height:1px;background:#000"></div>
<div style="left:565px;top:256px;width:3px;height:1px;background:#000"></div>
<div style="left:566px;top:257px;width:1px;height:1px;background:#000"></div>
<div style="left:418px;top:267px;width:66px;height:22px;background:#EFE7D8"></div>
<div style="left:418px;top:267px;width:66px;height:1px;background:#F3EFE3"></div>
<div style="left:418px;top:267px;width:1px;height:22px;background:#F3EFE3"></div>
<div style="left:418px;top:288px;width:66px;height:1px;background:#F6F6EE"></div>
<div style="left:483px;top:267px;width:1px;height:22px;background:#F6F6EE"></div>
<div style="left:419px;top:268px;width:64px;height:1px;background:#FFFFFF"></div>
<div style="left:419px;top:268px;width:1px;height:20px;background:#FFFFFF"></div>
<div style="left:419px;top:287px;width:64px;height:1px;background:#716D62"></div>
<div style="left:482px;top:268px;width:1px;height:20px;background:#716D62"></div>
<div style="left:420px;top:269px;width:62px;height:1px;background:#F3F1E6"></div>
<div style="left:420px;top:269px;width:1px;height:18px;background:#F3F1E6"></div>
<div style="left:420px;top:286px;width:62px;height:1px;background:#ACA597"></div>
<div style="left:481px;top:269px;width:1px;height:18px;background:#ACA597"></div>
<div class="t" style="left:433.30px;top:271px;font-size:10px;font-weight:normal;color:#000;transform:scaleX(0.915);-webkit-text-stroke:0px #000">Aggiungi</div>
<div style="left:227px;top:302px;width:144px;height:1px;background:#ACA597"></div>
<div style="left:227px;top:302px;width:1px;height:46px;background:#ACA597"></div>
<div style="left:227px;top:347px;width:144px;height:1px;background:#ACA597"></div>
<div style="left:370px;top:302px;width:1px;height:46px;background:#ACA597"></div>
<div style="left:228px;top:303px;width:144px;height:1px;background:#FFFFFF"></div>
<div style="left:228px;top:303px;width:1px;height:46px;background:#FFFFFF"></div>
<div style="left:228px;top:348px;width:144px;height:1px;background:#FFFFFF"></div>
<div style="left:371px;top:303px;width:1px;height:46px;background:#FFFFFF"></div>
<div style="left:232px;top:296px;width:41px;height:12px;background:#EFE7D8"></div>
<div class="t" style="left:233.30px;top:296px;font-size:10px;font-weight:normal;color:#000;transform:scaleX(0.929);-webkit-text-stroke:0px #000">Partenza</div>
<div class="t" style="left:256.52px;top:311px;font-size:10px;font-weight:normal;color:#000;transform:scaleX(0.952);-webkit-text-stroke:0px #000">Ore</div>
<div style="left:236px;top:323px;width:44px;height:18px;background:#FFFFFF"></div>
<div style="left:236px;top:323px;width:44px;height:1px;background:#ACA597"></div>
<div style="left:236px;top:323px;width:1px;height:18px;background:#ACA597"></div>
<div style="left:236px;top:340px;width:44px;height:1px;background:#FFFFFF"></div>
<div style="left:279px;top:323px;width:1px;height:18px;background:#FFFFFF"></div>
<div style="left:237px;top:324px;width:42px;height:1px;background:#716D62"></div>
<div style="left:237px;top:324px;width:1px;height:16px;background:#716D62"></div>
<div style="left:237px;top:339px;width:42px;height:1px;background:#F3EFE3"></div>
<div style="left:278px;top:324px;width:1px;height:16px;background:#F3EFE3"></div>
<div class="t" style="left:240.75px;top:325px;font-size:10px;font-weight:normal;color:#000;transform:scaleX(0.980);-webkit-text-stroke:0px #000">0</div>
<div style="left:281px;top:323px;width:15px;height:9px;background:#EFE7D8"></div>
<div style="left:281px;top:323px;width:15px;height:1px;background:#F3EFE3"></div>
<div style="left:281px;top:323px;width:1px;height:9px;background:#F3EFE3"></div>
<div style="left:281px;top:331px;width:15px;height:1px;background:#716D62"></div>
<div style="left:295px;top:323px;width:1px;height:9px;background:#716D62"></div>
<div style="left:282px;top:324px;width:13px;height:1px;background:#FFFFFF"></div>
<div style="left:282px;top:324px;width:1px;height:7px;background:#FFFFFF"></div>
<div style="left:282px;top:330px;width:13px;height:1px;background:#ACA597"></div>
<div style="left:294px;top:324px;width:1px;height:7px;background:#ACA597"></div>
<div style="left:281px;top:332px;width:15px;height:9px;background:#EFE7D8"></div>
<div style="left:281px;top:332px;width:15px;height:1px;background:#F3EFE3"></div>
<div style="left:281px;top:332px;width:1px;height:9px;background:#F3EFE3"></div>
<div style="left:281px;top:340px;width:15px;height:1px;background:#716D62"></div>
<div style="left:295px;top:332px;width:1px;height:9px;background:#716D62"></div>
<div style="left:282px;top:333px;width:13px;height:1px;background:#FFFFFF"></div>
<div style="left:282px;top:333px;width:1px;height:7px;background:#FFFFFF"></div>
<div style="left:282px;top:339px;width:13px;height:1px;background:#ACA597"></div>
<div style="left:294px;top:333px;width:1px;height:7px;background:#ACA597"></div>
<div style="left:287px;top:327px;width:3px;height:1px;background:#000"></div>
<div style="left:288px;top:326px;width:1px;height:1px;background:#000"></div>
<div style="left:287px;top:336px;width:3px;height:1px;background:#000"></div>
<div style="left:288px;top:337px;width:1px;height:1px;background:#000"></div>
<div class="t" style="left:319.98px;top:311px;font-size:10px;font-weight:normal;color:#000;transform:scaleX(0.962);-webkit-text-stroke:0px #000">Minuti</div>
<div style="left:304px;top:323px;width:45px;height:18px;background:#FFFFFF"></div>
<div style="left:304px;top:323px;width:45px;height:1px;background:#ACA597"></div>
<div style="left:304px;top:323px;width:1px;height:18px;background:#ACA597"></div>
<div style="left:304px;top:340px;width:45px;height:1px;background:#FFFFFF"></div>
<div style="left:348px;top:323px;width:1px;height:18px;background:#FFFFFF"></div>
<div style="left:305px;top:324px;width:43px;height:1px;background:#716D62"></div>
<div style="left:305px;top:324px;width:1px;height:16px;background:#716D62"></div>
<div style="left:305px;top:339px;width:43px;height:1px;background:#F3EFE3"></div>
<div style="left:347px;top:324px;width:1px;height:16px;background:#F3EFE3"></div>
<div class="t" style="left:308.75px;top:325px;font-size:10px;font-weight:normal;color:#000;transform:scaleX(0.980);-webkit-text-stroke:0px #000">0</div>
<div style="left:350px;top:323px;width:15px;height:9px;background:#EFE7D8"></div>
<div style="left:350px;top:323px;width:15px;height:1px;background:#F3EFE3"></div>
<div style="left:350px;top:323px;width:1px;height:9px;background:#F3EFE3"></div>
<div style="left:350px;top:331px;width:15px;height:1px;background:#716D62"></div>
<div style="left:364px;top:323px;width:1px;height:9px;background:#716D62"></div>
<div style="left:351px;top:324px;width:13px;height:1px;background:#FFFFFF"></div>
<div style="left:351px;top:324px;width:1px;height:7px;background:#FFFFFF"></div>
<div style="left:351px;top:330px;width:13px;height:1px;background:#ACA597"></div>
<div style="left:363px;top:324px;width:1px;height:7px;background:#ACA597"></div>
<div style="left:350px;top:332px;width:15px;height:9px;background:#EFE7D8"></div>
<div style="left:350px;top:332px;width:15px;height:1px;background:#F3EFE3"></div>
<div style="left:350px;top:332px;width:1px;height:9px;background:#F3EFE3"></div>
<div style="left:350px;top:340px;width:15px;height:1px;background:#716D62"></div>
<div style="left:364px;top:332px;width:1px;height:9px;background:#716D62"></div>
<div style="left:351px;top:333px;width:13px;height:1px;background:#FFFFFF"></div>
<div style="left:351px;top:333px;width:1px;height:7px;background:#FFFFFF"></div>
<div style="left:351px;top:339px;width:13px;height:1px;background:#ACA597"></div>
<div style="left:363px;top:333px;width:1px;height:7px;background:#ACA597"></div>
<div style="left:356px;top:327px;width:3px;height:1px;background:#000"></div>
<div style="left:357px;top:326px;width:1px;height:1px;background:#000"></div>
<div style="left:356px;top:336px;width:3px;height:1px;background:#000"></div>
<div style="left:357px;top:337px;width:1px;height:1px;background:#000"></div>
<div style="left:386px;top:302px;width:140px;height:1px;background:#ACA597"></div>
<div style="left:386px;top:302px;width:1px;height:66px;background:#ACA597"></div>
<div style="left:386px;top:367px;width:140px;height:1px;background:#ACA597"></div>
<div style="left:525px;top:302px;width:1px;height:66px;background:#ACA597"></div>
<div style="left:387px;top:303px;width:140px;height:1px;background:#FFFFFF"></div>
<div style="left:387px;top:303px;width:1px;height:66px;background:#FFFFFF"></div>
<div style="left:387px;top:368px;width:140px;height:1px;background:#FFFFFF"></div>
<div style="left:526px;top:303px;width:1px;height:66px;background:#FFFFFF"></div>
<div style="left:391px;top:296px;width:36px;height:12px;background:#EFE7D8"></div>
<div class="t" style="left:392.57px;top:296px;font-size:10px;font-weight:normal;color:#000;transform:scaleX(0.975);-webkit-text-stroke:0px #000">Dettagli</div>
<div style="left:395px;top:316px;width:11px;height:11px;background:#FFFFFF"></div>
<div style="left:395px;top:316px;width:11px;height:1px;background:#ACA597"></div>
<div style="left:395px;top:316px;width:1px;height:11px;background:#ACA597"></div>
<div style="left:395px;top:326px;width:11px;height:1px;background:#FFFFFF"></div>
<div style="left:405px;top:316px;width:1px;height:11px;background:#FFFFFF"></div>
<div style="left:396px;top:317px;width:9px;height:1px;background:#716D62"></div>
<div style="left:396px;top:317px;width:1px;height:9px;background:#716D62"></div>
<div style="left:396px;top:325px;width:9px;height:1px;background:#F3EFE3"></div>
<div style="left:404px;top:317px;width:1px;height:9px;background:#F3EFE3"></div>
<div style="left:395px;top:327px;width:11px;height:11px;background:#FFFFFF"></div>
<div style="left:395px;top:327px;width:11px;height:1px;background:#ACA597"></div>
<div style="left:395px;top:327px;width:1px;height:11px;background:#ACA597"></div>
<div style="left:395px;top:337px;width:11px;height:1px;background:#FFFFFF"></div>
<div style="left:405px;top:327px;width:1px;height:11px;background:#FFFFFF"></div>
<div style="left:396px;top:328px;width:9px;height:1px;background:#716D62"></div>
<div style="left:396px;top:328px;width:1px;height:9px;background:#716D62"></div>
<div style="left:396px;top:336px;width:9px;height:1px;background:#F3EFE3"></div>
<div style="left:404px;top:328px;width:1px;height:9px;background:#F3EFE3"></div>
<div class="t" style="left:409.07px;top:315px;font-size:10px;font-weight:normal;color:#000;transform:scaleX(0.970);-webkit-text-stroke:0px #000">Invertire orientamento</div>
<div class="t" style="left:409.34px;top:326px;font-size:10px;font-weight:normal;color:#000;transform:scaleX(0.912);-webkit-text-stroke:0px #000">Sbloccare prima di avviare</div>
<div class="t" style="left:393.17px;top:345px;font-size:10px;font-weight:normal;color:#000;transform:scaleX(0.979);-webkit-text-stroke:0px #000">Ritardo IN</div>
<div style="left:446px;top:343px;width:53px;height:18px;background:#FFFFFF"></div>
<div style="left:446px;top:343px;width:53px;height:1px;background:#ACA597"></div>
<div style="left:446px;top:343px;width:1px;height:18px;background:#ACA597"></div>
<div style="left:446px;top:360px;width:53px;height:1px;background:#FFFFFF"></div>
<div style="left:498px;top:343px;width:1px;height:18px;background:#FFFFFF"></div>
<div style="left:447px;top:344px;width:51px;height:1px;background:#716D62"></div>
<div style="left:447px;top:344px;width:1px;height:16px;background:#716D62"></div>
<div style="left:447px;top:359px;width:51px;height:1px;background:#F3EFE3"></div>
<div style="left:497px;top:344px;width:1px;height:16px;background:#F3EFE3"></div>
<div class="t" style="left:450.75px;top:345px;font-size:10px;font-weight:normal;color:#000;transform:scaleX(0.980);-webkit-text-stroke:0px #000">0</div>
<div style="left:500px;top:343px;width:15px;height:9px;background:#EFE7D8"></div>
<div style="left:500px;top:343px;width:15px;height:1px;background:#F3EFE3"></div>
<div style="left:500px;top:343px;width:1px;height:9px;background:#F3EFE3"></div>
<div style="left:500px;top:351px;width:15px;height:1px;background:#716D62"></div>
<div style="left:514px;top:343px;width:1px;height:9px;background:#716D62"></div>
<div style="left:501px;top:344px;width:13px;height:1px;background:#FFFFFF"></div>
<div style="left:501px;top:344px;width:1px;height:7px;background:#FFFFFF"></div>
<div style="left:501px;top:350px;width:13px;height:1px;background:#ACA597"></div>
<div style="left:513px;top:344px;width:1px;height:7px;background:#ACA597"></div>
<div style="left:500px;top:352px;width:15px;height:9px;background:#EFE7D8"></div>
<div style="left:500px;top:352px;width:15px;height:1px;background:#F3EFE3"></div>
<div style="left:500px;top:352px;width:1px;height:9px;background:#F3EFE3"></div>
<div style="left:500px;top:360px;width:15px;height:1px;background:#716D62"></div>
<div style="left:514px;top:352px;width:1px;height:9px;background:#716D62"></div>
<div style="left:501px;top:353px;width:13px;height:1px;background:#FFFFFF"></div>
<div style="left:501px;top:353px;width:1px;height:7px;background:#FFFFFF"></div>
<div style="left:501px;top:359px;width:13px;height:1px;background:#ACA597"></div>
<div style="left:513px;top:353px;width:1px;height:7px;background:#ACA597"></div>
<div style="left:506px;top:347px;width:3px;height:1px;background:#000"></div>
<div style="left:507px;top:346px;width:1px;height:1px;background:#000"></div>
<div style="left:506px;top:356px;width:3px;height:1px;background:#000"></div>
<div style="left:507px;top:357px;width:1px;height:1px;background:#000"></div>
<div style="left:222px;top:372px;width:66px;height:22px;background:#EFE7D8"></div>
<div style="left:222px;top:372px;width:66px;height:1px;background:#F3EFE3"></div>
<div style="left:222px;top:372px;width:1px;height:22px;background:#F3EFE3"></div>
<div style="left:222px;top:393px;width:66px;height:1px;background:#F6F6EE"></div>
<div style="left:287px;top:372px;width:1px;height:22px;background:#F6F6EE"></div>
<div style="left:223px;top:373px;width:64px;height:1px;background:#FFFFFF"></div>
<div style="left:223px;top:373px;width:1px;height:20px;background:#FFFFFF"></div>
<div style="left:223px;top:392px;width:64px;height:1px;background:#716D62"></div>
<div style="left:286px;top:373px;width:1px;height:20px;background:#716D62"></div>
<div style="left:224px;top:374px;width:62px;height:1px;background:#F3F1E6"></div>
<div style="left:224px;top:374px;width:1px;height:18px;background:#F3F1E6"></div>
<div style="left:224px;top:391px;width:62px;height:1px;background:#ACA597"></div>
<div style="left:285px;top:374px;width:1px;height:18px;background:#ACA597"></div>
<div class="t" style="left:240.96px;top:377px;font-size:10px;font-weight:normal;color:#FFFFFF;transform:scaleX(0.850);-webkit-text-stroke:0px #FFFFFF">Elimina</div>
<div class="t" style="left:239.96px;top:376px;font-size:10px;font-weight:normal;color:#ACA597;transform:scaleX(0.850);-webkit-text-stroke:0px #ACA597">Elimina</div>
<div style="left:295px;top:372px;width:66px;height:22px;background:#EFE7D8"></div>
<div style="left:295px;top:372px;width:66px;height:1px;background:#F3EFE3"></div>
<div style="left:295px;top:372px;width:1px;height:22px;background:#F3EFE3"></div>
<div style="left:295px;top:393px;width:66px;height:1px;background:#F6F6EE"></div>
<div style="left:360px;top:372px;width:1px;height:22px;background:#F6F6EE"></div>
<div style="left:296px;top:373px;width:64px;height:1px;background:#FFFFFF"></div>
<div style="left:296px;top:373px;width:1px;height:20px;background:#FFFFFF"></div>
<div style="left:296px;top:392px;width:64px;height:1px;background:#716D62"></div>
<div style="left:359px;top:373px;width:1px;height:20px;background:#716D62"></div>
<div style="left:297px;top:374px;width:62px;height:1px;background:#F3F1E6"></div>
<div style="left:297px;top:374px;width:1px;height:18px;background:#F3F1E6"></div>
<div style="left:297px;top:391px;width:62px;height:1px;background:#ACA597"></div>
<div style="left:358px;top:374px;width:1px;height:18px;background:#ACA597"></div>
<div class="t" style="left:311.09px;top:377px;font-size:10px;font-weight:normal;color:#FFFFFF;transform:scaleX(0.900);-webkit-text-stroke:0px #FFFFFF">Modifica</div>
<div class="t" style="left:310.09px;top:376px;font-size:10px;font-weight:normal;color:#ACA597;transform:scaleX(0.900);-webkit-text-stroke:0px #ACA597">Modifica</div>
<div style="left:368px;top:372px;width:66px;height:22px;background:#EFE7D8"></div>
<div style="left:368px;top:372px;width:66px;height:1px;background:#F3EFE3"></div>
<div style="left:368px;top:372px;width:1px;height:22px;background:#F3EFE3"></div>
<div style="left:368px;top:393px;width:66px;height:1px;background:#F6F6EE"></div>
<div style="left:433px;top:372px;width:1px;height:22px;background:#F6F6EE"></div>
<div style="left:369px;top:373px;width:64px;height:1px;background:#FFFFFF"></div>
<div style="left:369px;top:373px;width:1px;height:20px;background:#FFFFFF"></div>
<div style="left:369px;top:392px;width:64px;height:1px;background:#716D62"></div>
<div style="left:432px;top:373px;width:1px;height:20px;background:#716D62"></div>
<div style="left:370px;top:374px;width:62px;height:1px;background:#F3F1E6"></div>
<div style="left:370px;top:374px;width:1px;height:18px;background:#F3F1E6"></div>
<div style="left:370px;top:391px;width:62px;height:1px;background:#ACA597"></div>
<div style="left:431px;top:374px;width:1px;height:18px;background:#ACA597"></div>
<div class="t" style="left:395.79px;top:377px;font-size:10px;font-weight:normal;color:#FFFFFF;transform:scaleX(0.900);-webkit-text-stroke:0px #FFFFFF">Su</div>
<div class="t" style="left:394.79px;top:376px;font-size:10px;font-weight:normal;color:#ACA597;transform:scaleX(0.900);-webkit-text-stroke:0px #ACA597">Su</div>
<div style="left:441px;top:372px;width:66px;height:22px;background:#EFE7D8"></div>
<div style="left:441px;top:372px;width:66px;height:1px;background:#F3EFE3"></div>
<div style="left:441px;top:372px;width:1px;height:22px;background:#F3EFE3"></div>
<div style="left:441px;top:393px;width:66px;height:1px;background:#F6F6EE"></div>
<div style="left:506px;top:372px;width:1px;height:22px;background:#F6F6EE"></div>
<div style="left:442px;top:373px;width:64px;height:1px;background:#FFFFFF"></div>
<div style="left:442px;top:373px;width:1px;height:20px;background:#FFFFFF"></div>
<div style="left:442px;top:392px;width:64px;height:1px;background:#716D62"></div>
<div style="left:505px;top:373px;width:1px;height:20px;background:#716D62"></div>
<div style="left:443px;top:374px;width:62px;height:1px;background:#F3F1E6"></div>
<div style="left:443px;top:374px;width:1px;height:18px;background:#F3F1E6"></div>
<div style="left:443px;top:391px;width:62px;height:1px;background:#ACA597"></div>
<div style="left:504px;top:374px;width:1px;height:18px;background:#ACA597"></div>
<div class="t" style="left:467.32px;top:377px;font-size:10px;font-weight:normal;color:#FFFFFF;transform:scaleX(0.900);-webkit-text-stroke:0px #FFFFFF">Giù</div>
<div class="t" style="left:466.32px;top:376px;font-size:10px;font-weight:normal;color:#ACA597;transform:scaleX(0.900);-webkit-text-stroke:0px #ACA597">Giù</div>
<div style="left:514px;top:372px;width:66px;height:22px;background:#EFE7D8"></div>
<div style="left:514px;top:372px;width:66px;height:1px;background:#F3EFE3"></div>
<div style="left:514px;top:372px;width:1px;height:22px;background:#F3EFE3"></div>
<div style="left:514px;top:393px;width:66px;height:1px;background:#F6F6EE"></div>
<div style="left:579px;top:372px;width:1px;height:22px;background:#F6F6EE"></div>
<div style="left:515px;top:373px;width:64px;height:1px;background:#FFFFFF"></div>
<div style="left:515px;top:373px;width:1px;height:20px;background:#FFFFFF"></div>
<div style="left:515px;top:392px;width:64px;height:1px;background:#716D62"></div>
<div style="left:578px;top:373px;width:1px;height:20px;background:#716D62"></div>
<div style="left:516px;top:374px;width:62px;height:1px;background:#F3F1E6"></div>
<div style="left:516px;top:374px;width:1px;height:18px;background:#F3F1E6"></div>
<div style="left:516px;top:391px;width:62px;height:1px;background:#ACA597"></div>
<div style="left:577px;top:374px;width:1px;height:18px;background:#ACA597"></div>
<div class="t" style="left:531.66px;top:377px;font-size:10px;font-weight:normal;color:#FFFFFF;transform:scaleX(0.900);-webkit-text-stroke:0px #FFFFFF">Azioni...</div>
<div class="t" style="left:530.66px;top:376px;font-size:10px;font-weight:normal;color:#ACA597;transform:scaleX(0.900);-webkit-text-stroke:0px #ACA597">Azioni...</div>
<div style="left:385px;top:409px;width:66px;height:22px;background:#EFE7D8"></div>
<div style="left:385px;top:409px;width:66px;height:1px;background:#F3EFE3"></div>
<div style="left:385px;top:409px;width:1px;height:22px;background:#F3EFE3"></div>
<div style="left:385px;top:430px;width:66px;height:1px;background:#F6F6EE"></div>
<div style="left:450px;top:409px;width:1px;height:22px;background:#F6F6EE"></div>
<div style="left:386px;top:410px;width:64px;height:1px;background:#FFFFFF"></div>
<div style="left:386px;top:410px;width:1px;height:20px;background:#FFFFFF"></div>
<div style="left:386px;top:429px;width:64px;height:1px;background:#716D62"></div>
<div style="left:449px;top:410px;width:1px;height:20px;background:#716D62"></div>
<div style="left:387px;top:411px;width:62px;height:1px;background:#F3F1E6"></div>
<div style="left:387px;top:411px;width:1px;height:18px;background:#F3F1E6"></div>
<div style="left:387px;top:428px;width:62px;height:1px;background:#ACA597"></div>
<div style="left:448px;top:411px;width:1px;height:18px;background:#ACA597"></div>
<div class="t" style="left:411.04px;top:413px;font-size:10px;font-weight:normal;color:#000;transform:scaleX(0.916);-webkit-text-stroke:0px #000">OK</div>
<div style="left:455px;top:409px;width:66px;height:22px;background:#EFE7D8"></div>
<div style="left:455px;top:409px;width:66px;height:1px;background:#F3EFE3"></div>
<div style="left:455px;top:409px;width:1px;height:22px;background:#F3EFE3"></div>
<div style="left:455px;top:430px;width:66px;height:1px;background:#F6F6EE"></div>
<div style="left:520px;top:409px;width:1px;height:22px;background:#F6F6EE"></div>
<div style="left:456px;top:410px;width:64px;height:1px;background:#FFFFFF"></div>
<div style="left:456px;top:410px;width:1px;height:20px;background:#FFFFFF"></div>
<div style="left:456px;top:429px;width:64px;height:1px;background:#716D62"></div>
<div style="left:519px;top:410px;width:1px;height:20px;background:#716D62"></div>
<div style="left:457px;top:411px;width:62px;height:1px;background:#F3F1E6"></div>
<div style="left:457px;top:411px;width:1px;height:18px;background:#F3F1E6"></div>
<div style="left:457px;top:428px;width:62px;height:1px;background:#ACA597"></div>
<div style="left:518px;top:411px;width:1px;height:18px;background:#ACA597"></div>
<div class="t" style="left:473.20px;top:413px;font-size:10px;font-weight:normal;color:#000;transform:scaleX(0.872);-webkit-text-stroke:0px #000">Annulla</div>
<div style="left:524px;top:409px;width:67px;height:22px;background:#EFE7D8"></div>
<div style="left:524px;top:409px;width:67px;height:1px;background:#F3EFE3"></div>
<div style="left:524px;top:409px;width:1px;height:22px;background:#F3EFE3"></div>
<div style="left:524px;top:430px;width:67px;height:1px;background:#F6F6EE"></div>
<div style="left:590px;top:409px;width:1px;height:22px;background:#F6F6EE"></div>
<div style="left:525px;top:410px;width:65px;height:1px;background:#FFFFFF"></div>
<div style="left:525px;top:410px;width:1px;height:20px;background:#FFFFFF"></div>
<div style="left:525px;top:429px;width:65px;height:1px;background:#716D62"></div>
<div style="left:589px;top:410px;width:1px;height:20px;background:#716D62"></div>
<div style="left:526px;top:411px;width:63px;height:1px;background:#F3F1E6"></div>
<div style="left:526px;top:411px;width:1px;height:18px;background:#F3F1E6"></div>
<div style="left:526px;top:428px;width:63px;height:1px;background:#ACA597"></div>
<div style="left:588px;top:411px;width:1px;height:18px;background:#ACA597"></div>
<div class="t" style="left:543.00px;top:413px;font-size:10px;font-weight:normal;color:#000;transform:scaleX(0.867);-webkit-text-stroke:0px #000">Applica</div>
</body></html>
